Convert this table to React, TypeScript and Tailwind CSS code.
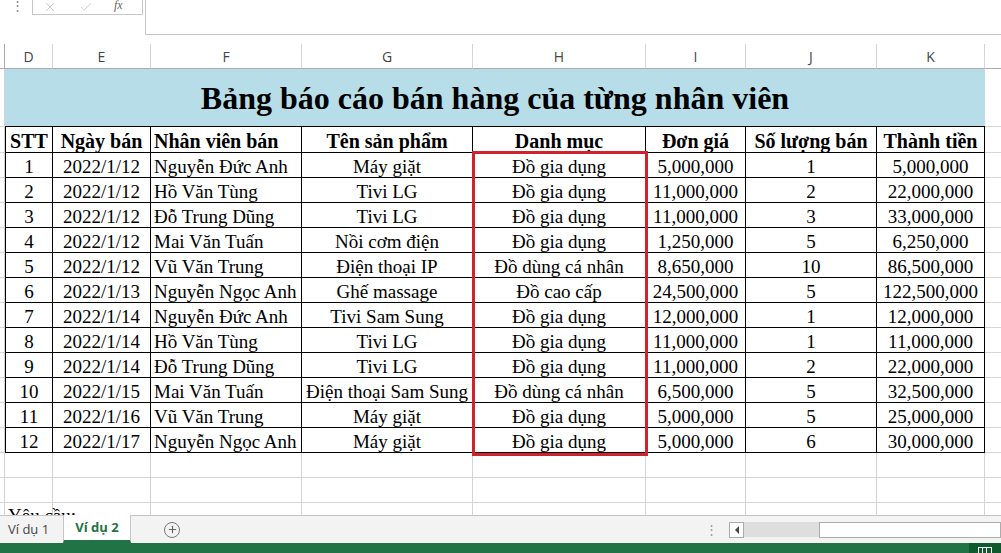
import React from 'react';
import { X, Check, Plus } from 'lucide-react';

const cols = [
  { letter: 'D', w: 'w-[48px]', align: 'justify-center' },
  { letter: 'E', w: 'w-[98px]', align: 'justify-center' },
  { letter: 'F', w: 'w-[151px]', align: 'justify-start pl-[3px]' },
  { letter: 'G', w: 'w-[171px]', align: 'justify-center' },
  { letter: 'H', w: 'w-[173px]', align: 'justify-center' },
  { letter: 'I', w: 'w-[100px]', align: 'justify-center' },
  { letter: 'J', w: 'w-[131px]', align: 'justify-center' },
  { letter: 'K', w: 'w-[108px]', align: 'justify-center' },
];

const headers = ['STT', 'Ngày bán', 'Nhân viên bán', 'Tên sản phẩm', 'Danh mục', 'Đơn giá', 'Số lượng bán', 'Thành tiền'];

const rows = [
  ['1', '2022/1/12', 'Nguyễn Đức Anh', 'Máy giặt', 'Đồ gia dụng', '5,000,000', '1', '5,000,000'],
  ['2', '2022/1/12', 'Hồ Văn Tùng', 'Tivi LG', 'Đồ gia dụng', '11,000,000', '2', '22,000,000'],
  ['3', '2022/1/12', 'Đỗ Trung Dũng', 'Tivi LG', 'Đồ gia dụng', '11,000,000', '3', '33,000,000'],
  ['4', '2022/1/12', 'Mai Văn Tuấn', 'Nồi cơm điện', 'Đồ gia dụng', '1,250,000', '5', '6,250,000'],
  ['5', '2022/1/12', 'Vũ Văn Trung', 'Điện thoại IP', 'Đồ dùng cá nhân', '8,650,000', '10', '86,500,000'],
  ['6', '2022/1/13', 'Nguyễn Ngọc Anh', 'Ghế massage', 'Đồ cao cấp', '24,500,000', '5', '122,500,000'],
  ['7', '2022/1/14', 'Nguyễn Đức Anh', 'Tivi Sam Sung', 'Đồ gia dụng', '12,000,000', '1', '12,000,000'],
  ['8', '2022/1/14', 'Hồ Văn Tùng', 'Tivi LG', 'Đồ gia dụng', '11,000,000', '1', '11,000,000'],
  ['9', '2022/1/14', 'Đỗ Trung Dũng', 'Tivi LG', 'Đồ gia dụng', '11,000,000', '2', '22,000,000'],
  ['10', '2022/1/15', 'Mai Văn Tuấn', 'Điện thoại Sam Sung', 'Đồ dùng cá nhân', '6,500,000', '5', '32,500,000'],
  ['11', '2022/1/16', 'Vũ Văn Trung', 'Máy giặt', 'Đồ gia dụng', '5,000,000', '5', '25,000,000'],
  ['12', '2022/1/17', 'Nguyễn Ngọc Anh', 'Máy giặt', 'Đồ gia dụng', '5,000,000', '6', '30,000,000'],
];

const serif = "font-['Liberation_Serif',serif]";
const ui = "font-['Open_Sans','Noto_Sans',sans-serif]";

const RowHead = () => <div className="w-[5px] h-full border-b border-r border-[#d4d4d4]" />;
const Tail = () => <div className="w-[16px] h-full border-b border-[#d4d4d4]" />;

const TableRow: React.FC<{ cells: string[]; bold?: boolean; h: string }> = ({ cells, bold, h }) => (
  <div className={`flex ${h} ${serif} text-black ${bold ? 'font-bold text-[20px]' : 'text-[19px]'}`}>
    <RowHead />
    {cols.map((c, i) => (
      <div
        key={c.letter}
        className={`${c.w} h-full flex items-center ${c.align} pt-[2px] border-r border-b border-black whitespace-nowrap overflow-hidden leading-none ${i === 0 ? 'border-l' : ''}`}
      >
        {cells[i]}
      </div>
    ))}
    <Tail />
  </div>
);

const EmptyRow: React.FC<{ text?: string }> = ({ text }) => (
  <div className={`flex h-[25px] ${serif} text-[19px] text-black`}>
    <RowHead />
    {cols.map((c, i) => (
      <div key={c.letter} className={`${c.w} h-full border-b border-r border-[#d4d4d4] flex items-center overflow-visible whitespace-nowrap`}>
        {i === 0 && text ? <span className="pl-[3px] pt-[2px]">{text}</span> : null}
      </div>
    ))}
    <Tail />
  </div>
);

export default function App() {
  return (
    <div className="w-[1001px] h-[553px] flex flex-col bg-white overflow-hidden">
      {/* formula bar */}
      <div className="h-[44px] flex shrink-0">
        <div className={`w-[32px] flex justify-center pl-[2px] text-[#888] text-[13px] leading-none ${ui}`}>
          <span className="mt-[-1px]">⋮</span>
        </div>
        <div className="h-[16px] mt-[-1px] w-[111px] border border-[#c6c6c6] flex items-center text-[#c4c4c4]">
          <X size={14} className="ml-[10px]" strokeWidth={1.5} />
          <Check size={14} className="ml-[22px]" strokeWidth={1.5} />
          <span className="ml-[21px] mt-[-4px] italic font-['Liberation_Serif',serif] text-[12px] text-[#666]">fx</span>
        </div>
        <div className="ml-[2px] flex-1 h-[35px] border-l border-b border-[#c6c6c6]" />
      </div>

      {/* grid */}
      <div className="flex-1 overflow-hidden relative">
        {/* column headings */}
        <div className={`flex h-[25px] ${ui} text-[14px] text-[#444]`}>
          <div className="w-[5px] h-full border-b border-r border-[#ababab]" />
          {cols.map((c) => (
            <div key={c.letter} className={`${c.w} h-full flex items-center justify-center border-r border-[#d4d4d4] border-b border-b-[#ababab]`}>
              {c.letter}
            </div>
          ))}
          <div className="w-[16px] h-full border-b border-[#ababab]" />
        </div>

        {/* title */}
        <div className="flex h-[58px]">
          <RowHead />
          <div className={`w-[980px] h-full bg-[#b7dee8] border-b border-black flex items-center justify-center ${serif} font-bold text-[32px] text-black whitespace-nowrap`}>
            Bảng báo cáo bán hàng của từng nhân viên
          </div>
          <Tail />
        </div>

        <TableRow cells={headers} bold h="h-[26px]" />
        {rows.map((r) => (
          <TableRow key={r[0]} cells={r} h="h-[25px]" />
        ))}
        <EmptyRow />
        <EmptyRow />
        <EmptyRow text="Yêu cầu:" />

        {/* highlight */}
        <div className="absolute left-[472px] top-[107px] w-[176px] h-[305px] border-[3px] border-[#d0232b] pointer-events-none" />
      </div>

      {/* sheet tabs */}
      <div className={`h-[28px] shrink-0 flex bg-[#f3f3f3] border-t border-[#c6c6c6] ${ui} text-[13px]`}>
        <div className="w-[63px] flex items-center pl-[8px] text-[#444]">Ví dụ 1</div>
        <div className="w-[68px] mt-[-1px] bg-white border-x border-[#c6c6c6] border-b-[3px] border-b-[#217346] flex items-center justify-center font-bold text-[#217346]">
          Ví dụ 2
        </div>
        <div className="ml-[33px] flex items-center">
          <div className="w-[16px] h-[16px] rounded-full border border-[#777] flex items-center justify-center text-[#666]">
            <Plus size={11} strokeWidth={2.5} />
          </div>
        </div>
        <div className="flex-1" />
        <div className="flex items-center text-[#999] text-[13px] mr-[11px]">⋮</div>
        <div className="flex items-center">
          <div className="w-[15px] h-[16px] bg-white border border-[#ababab] flex items-center justify-center">
            <div className="w-0 h-0 border-y-[4px] border-y-transparent border-r-[4px] border-r-[#444]" />
          </div>
          <div className="w-[75px] h-[15px] bg-[#dedede]" />
          <div className="w-[182px] h-[16px] bg-white border border-[#ababab]" />
        </div>
      </div>

      {/* status bar */}
      <div className="h-[10px] shrink-0 bg-[#217346] flex justify-end">
        <div className="w-[32px] h-full bg-[#0e5a2e] flex justify-center pt-[4px] overflow-hidden">
          <div className="w-[14px] h-[10px] border border-white grid grid-cols-3">
            <div className="border-r border-white" />
            <div className="border-r border-white" />
            <div />
          </div>
        </div>
      </div>
    </div>
  );
}
